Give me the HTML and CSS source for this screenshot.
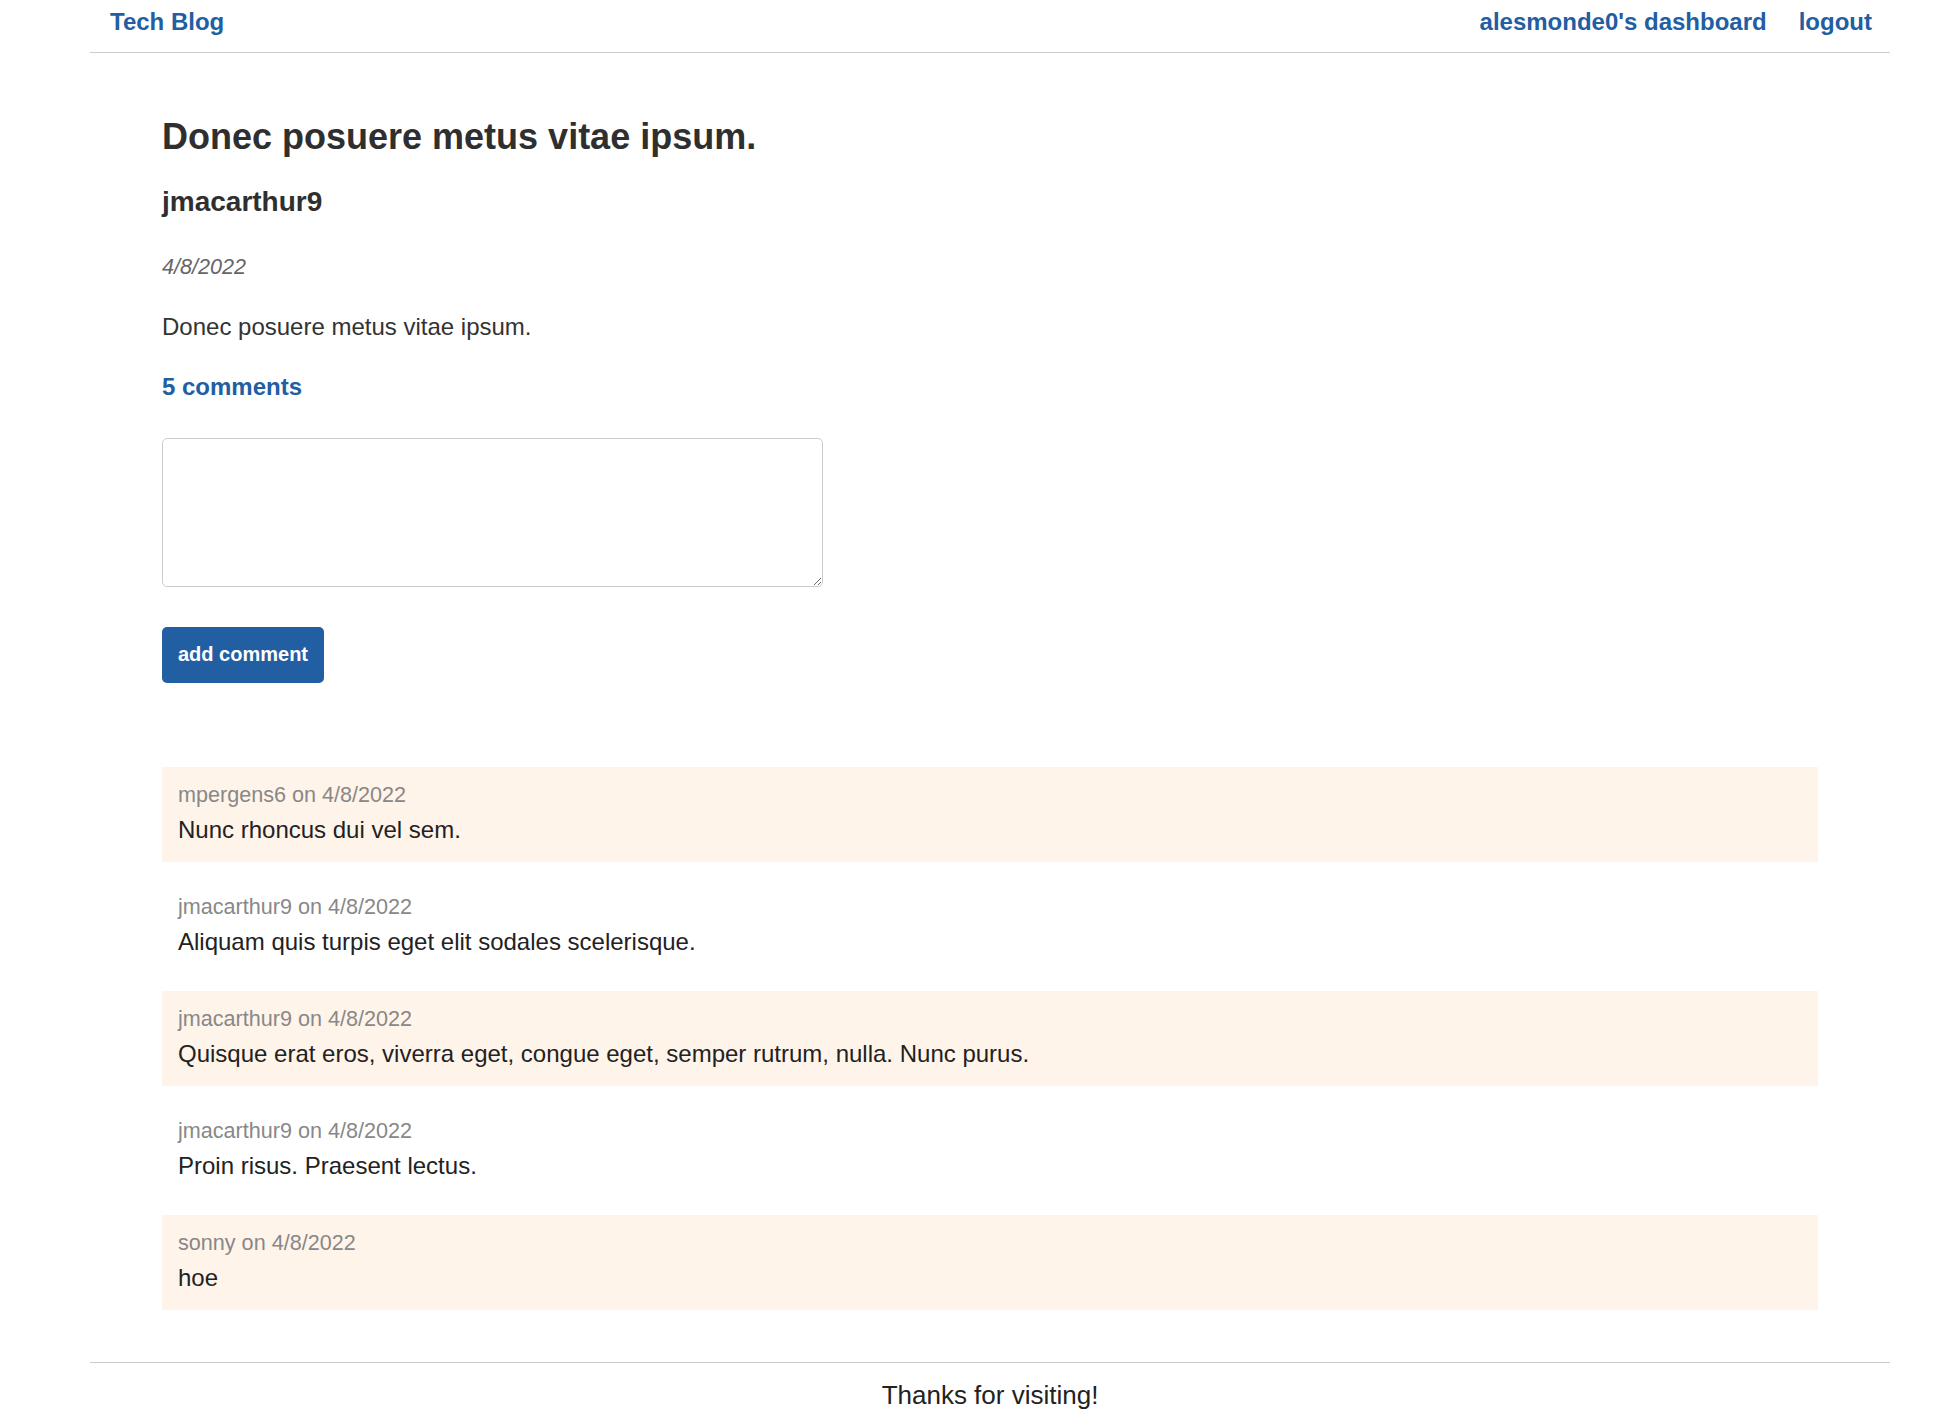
FILE: index.html
```html
<!DOCTYPE html>
<html lang="en">
<head>
<meta charset="utf-8">
<title>Tech Blog</title>
<link rel="stylesheet" href="styles.css">
</head>
<body>
<div class="page">
  <header class="site-header">
    <a class="brand" href="#">Tech Blog</a>
    <nav class="nav">
      <a href="#">alesmonde0's dashboard</a>
      <a href="#">logout</a>
    </nav>
  </header>
  <main class="content">
    <article class="post">
      <h1 class="post-title">Donec posuere metus vitae ipsum.</h1>
      <h2 class="post-author">jmacarthur9</h2>
      <p class="post-date">4/8/2022</p>
      <p class="post-body">Donec posuere metus vitae ipsum.</p>
      <a class="comment-count" href="#">5 comments</a>
    </article>
    <form class="comment-form">
      <textarea class="comment-input"></textarea>
      <button class="btn" type="button">add comment</button>
    </form>
    <section class="comments">
      <div class="comment">
        <p class="comment-meta">mpergens6 on 4/8/2022</p>
        <p class="comment-text">Nunc rhoncus dui vel sem.</p>
      </div>
      <div class="comment">
        <p class="comment-meta">jmacarthur9 on 4/8/2022</p>
        <p class="comment-text">Aliquam quis turpis eget elit sodales scelerisque.</p>
      </div>
      <div class="comment">
        <p class="comment-meta">jmacarthur9 on 4/8/2022</p>
        <p class="comment-text">Quisque erat eros, viverra eget, congue eget, semper rutrum, nulla. Nunc purus.</p>
      </div>
      <div class="comment">
        <p class="comment-meta">jmacarthur9 on 4/8/2022</p>
        <p class="comment-text">Proin risus. Praesent lectus.</p>
      </div>
      <div class="comment">
        <p class="comment-meta">sonny on 4/8/2022</p>
        <p class="comment-text">hoe</p>
      </div>
    </section>
  </main>
  <footer class="site-footer">Thanks for visiting!</footer>
</div>
</body>
</html>
```

FILE: styles.css
```css
* { box-sizing: border-box; }

html, body {
  margin: 0;
  padding: 0;
  background: #fff;
}

body {
  font-family: "Liberation Sans", Arial, sans-serif;
  font-size: 24px;
  color: #333;
}

a { color: #215ea2; text-decoration: none; font-weight: bold; }

.page {
  margin: 0 64px 0 90px;
}

.site-header {
  display: flex;
  justify-content: space-between;
  align-items: center;
  padding: 7px 18px 16px 20px;
  border-bottom: 1px solid #cccccc;
  line-height: 29px;
}

.nav {
  display: flex;
  gap: 32px;
}

.content {
  padding: 0 72px;
}

.post-title {
  margin: 62px 0 0;
  font-size: 36px;
  line-height: 43px;
  color: #2f2f2f;
}

.post-author {
  margin: 27px 0 0;
  font-size: 28px;
  line-height: 34px;
  color: #2f2f2f;
}

.post-date {
  margin: 34.5px 0 0;
  font-size: 21.6px;
  line-height: 26px;
  font-style: italic;
  color: #666;
}

.post-body {
  margin: 32px 0 0;
  line-height: 29px;
}

.comment-count {
  display: block;
  margin-top: 31px;
  line-height: 29px;
}

.comment-form {
  display: flex;
  flex-direction: column;
  align-items: flex-start;
}

.comment-input {
  margin-top: 37px;
  width: 661px;
  height: 149px;
  border: 1px solid #cccccc;
  border-radius: 5px;
  font-family: inherit;
  font-size: 20px;
  padding: 8px;
}

.btn {
  margin-top: 40px;
  height: 56px;
  padding: 0 16px;
  background: #215ea2;
  color: #fff;
  border: none;
  border-radius: 5px;
  font-family: "Liberation Sans", Arial, sans-serif;
  font-size: 20px;
  font-weight: bold;
}

.comments {
  margin-top: 84px;
  display: flex;
  flex-direction: column;
  gap: 17px;
}

.comment {
  padding: 15px 16px 18px;
}

.comment:nth-child(odd) {
  background: #fff4ea;
}

.comment-meta {
  margin: 0;
  font-size: 21.6px;
  line-height: 26px;
  color: #888;
}

.comment-text {
  margin: 7px 0 0;
  line-height: 29px;
  color: #222;
}

.site-footer {
  margin-top: 52px;
  border-top: 1px solid #cccccc;
  padding-top: 17px;
  text-align: center;
  font-size: 26px;
  line-height: 31px;
  color: #222;
}
```
